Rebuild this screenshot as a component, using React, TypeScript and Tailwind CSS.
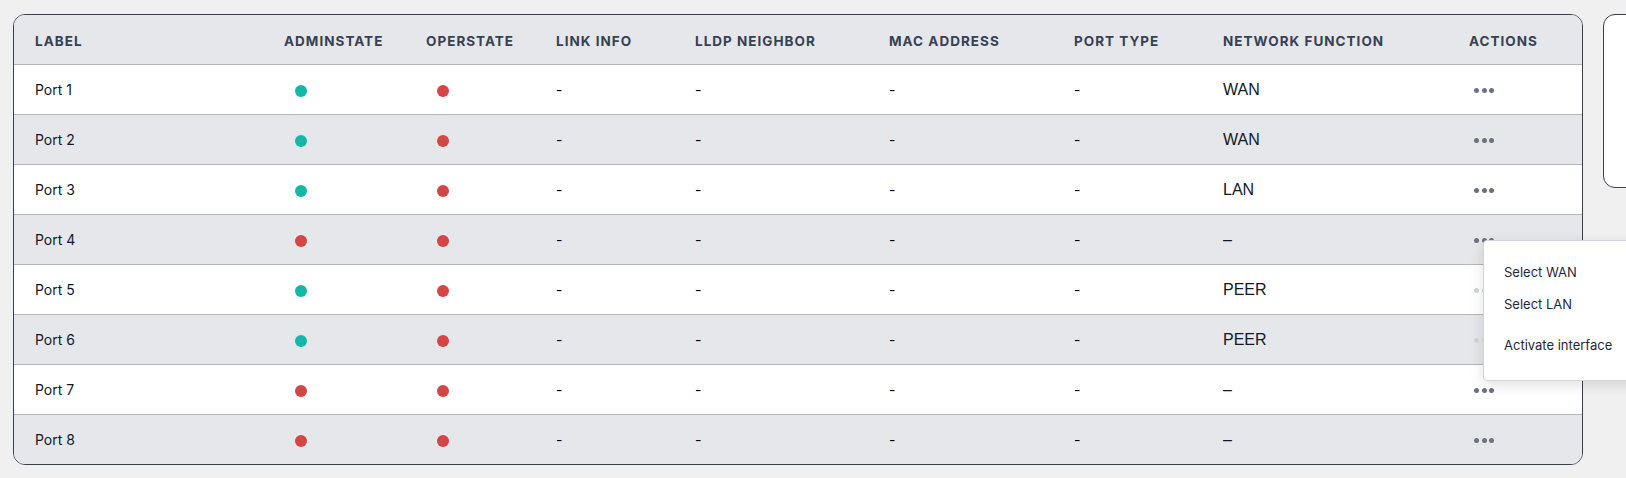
// Ports table with an open row-actions menu.

type Port = {
  label: string;
  admin: boolean;
  oper: boolean;
  fn: string;
  faded?: boolean;
};

const PORTS: Port[] = [
  { label: "Port 1", admin: true, oper: false, fn: "WAN" },
  { label: "Port 2", admin: true, oper: false, fn: "WAN" },
  { label: "Port 3", admin: true, oper: false, fn: "LAN" },
  { label: "Port 4", admin: false, oper: false, fn: "–" },
  { label: "Port 5", admin: true, oper: false, fn: "PEER", faded: true },
  { label: "Port 6", admin: true, oper: false, fn: "PEER", faded: true },
  { label: "Port 7", admin: false, oper: false, fn: "–" },
  { label: "Port 8", admin: false, oper: false, fn: "–" },
];

const COLUMNS = [
  { title: "Label", width: "w-[249px]" },
  { title: "Adminstate", width: "w-[142px]" },
  { title: "Operstate", width: "w-[130px]" },
  { title: "Link Info", width: "w-[139px]" },
  { title: "LLDP Neighbor", width: "w-[194px]" },
  { title: "MAC Address", width: "w-[185px]" },
  { title: "Port Type", width: "w-[149px]" },
  { title: "Network Function", width: "w-[246px]" },
  { title: "Actions", width: "w-[134px]" },
];

function StatusDot({ up }: { up: boolean }) {
  return (
    <span
      className={`inline-block h-3 w-3 rounded-full align-middle ${up ? "bg-[#14b8a6]" : "bg-[#d44545]"}`}
    />
  );
}

function MoreDots({ faded }: { faded?: boolean }) {
  const tone = faded ? "bg-[#d1d5db]" : "bg-[#6b7280]";
  return (
    <span className="inline-flex items-center gap-[2.5px] align-middle">
      <span className={`h-[5px] w-[5px] rounded-full ${tone}`} />
      <span className={`h-[5px] w-[5px] rounded-full ${tone}`} />
      <span className={`h-[5px] w-[5px] rounded-full ${tone}`} />
    </span>
  );
}

export default function App() {
  return (
    <div
      className="relative h-[478px] w-[1626px] overflow-hidden bg-[#f0f0f0]"
      style={{ fontFamily: "Inter, 'Noto Sans', sans-serif" }}
    >
      <div className="flex items-start gap-[20px] pl-[13px] pt-[14px]">
        <div className="shrink-0 overflow-hidden rounded-xl border border-[#374151] bg-white">
          <table className="table-fixed border-collapse text-left">
            <thead>
              <tr className="h-[49px] bg-[#e5e7eb]">
                {COLUMNS.map((c) => (
                  <th
                    key={c.title}
                    className={`${c.width} pl-[21px] pt-[3px] align-middle text-[13.5px] font-bold uppercase tracking-[0.075em] text-[#374151]`}
                  >
                    {c.title}
                  </th>
                ))}
              </tr>
            </thead>
            <tbody>
              {PORTS.map((p, i) => (
                <tr
                  key={p.label}
                  className={`h-[50px] border-t border-[#b5b5bc] ${i % 2 === 1 ? "bg-[#e5e7eb]" : "bg-white"}`}
                >
                  <td className="pl-[21px] text-[14px] text-[#111827]">{p.label}</td>
                  <td className="pl-[32px]">
                    <StatusDot up={p.admin} />
                  </td>
                  <td className="pl-[32px]">
                    <StatusDot up={p.oper} />
                  </td>
                  <td className="pl-[21px] text-[14px] text-black">-</td>
                  <td className="pl-[21px] text-[14px] text-black">-</td>
                  <td className="pl-[21px] text-[14px] text-black">-</td>
                  <td className="pl-[21px] text-[14px] text-black">-</td>
                  <td
                    className="pl-[21px] pt-[2px] text-[16px] text-[#111827]"
                    style={{ fontFamily: "'Liberation Sans', Arial, sans-serif" }}
                  >
                    {p.fn}
                  </td>
                  <td className="pl-[26px]">
                    <MoreDots faded={p.faded} />
                  </td>
                </tr>
              ))}
            </tbody>
          </table>
        </div>

        <div className="h-[174px] w-[200px] shrink-0 rounded-xl border border-[#374151] bg-white" />
      </div>

      {/* open actions menu for Port 4 */}
      <div className="absolute left-[1483px] top-[240px] h-[141px] w-[220px] rounded-[4px] border border-[#d1d5db] bg-white shadow-[0_4px_14px_rgba(0,0,0,0.12)]">
        <ul className="flex flex-col pl-[20px] pt-[22px] text-[13px] text-[#1f2937]">
          <li className="h-[32px] leading-[18px]">Select WAN</li>
          <li className="h-[41px] leading-[18px]">Select LAN</li>
          <li className="leading-[18px]">Activate interface</li>
        </ul>
      </div>
    </div>
  );
}
